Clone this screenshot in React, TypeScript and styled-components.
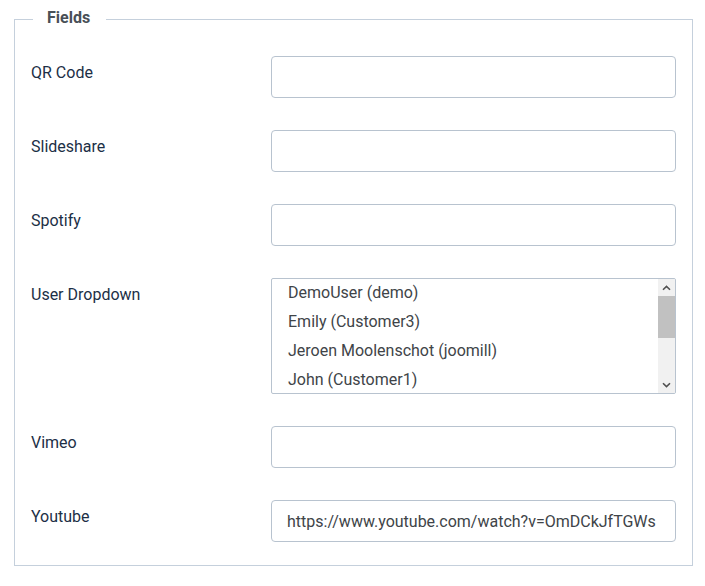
import React from "react";
import styled, { createGlobalStyle } from "styled-components";

const Global = createGlobalStyle`
  html, body { margin: 0; padding: 0; background: #fff; }
  body { font-family: Roboto, "Noto Sans", Arial, sans-serif; }
  * { box-sizing: border-box; }
`;

const Page = styled.div`
  padding: 6px 13px 0 14px;
`;

const Fieldset = styled.fieldset`
  margin: 0;
  padding: 0 16px 23px 16px;
  border: 1px solid #c5d0dc;
  min-width: 0;
  width: 679px;
`;

const Legend = styled.legend`
  margin-left: 2px;
  padding: 0 16px 2px 14px;
  font-size: 16px;
  font-weight: 700;
  line-height: 24px;
  color: #495057;
`;

const Rows = styled.div`
  display: flex;
  flex-direction: column;
  gap: 32px;
  padding-top: 24px;
`;

const Row = styled.div`
  display: grid;
  grid-template-columns: 240px 1fr;
  align-items: start;
`;

const Label = styled.label`
  padding-top: 5px;
  font-size: 16px;
  line-height: 24px;
  color: #1c2f46;
`;

const Input = styled.input`
  display: block;
  width: 100%;
  height: 42px;
  margin: 0;
  padding: 0 15px;
  border: 1px solid #b8c3cf;
  border-radius: 4px;
  background: #fff;
  font-family: Roboto, "Noto Sans", Arial, sans-serif;
  font-size: 16px;
  color: #404448;
  outline: none;
`;

const ListBox = styled.div`
  display: flex;
  height: 116px;
  border: 1px solid #b8c3cf;
  border-radius: 2px;
  overflow: hidden;
  background: #fff;
`;

const Options = styled.div`
  flex: 1;
  overflow: hidden;
  margin-top: -1px;
`;

const Option = styled.div`
  height: 29px;
  padding: 0 16px;
  font-size: 16px;
  line-height: 29px;
  color: #404448;
  white-space: nowrap;
`;

const Scrollbar = styled.div`
  width: 17px;
  display: flex;
  flex-direction: column;
  background: #f1f1f1;
`;

const ArrowBtn = styled.div`
  height: 17px;
  display: flex;
  align-items: center;
  justify-content: center;
`;

const Track = styled.div`
  flex: 1;
  display: flex;
  flex-direction: column;
`;

const Thumb = styled.div`
  height: 42px;
  background: #c1c1c1;
`;

const Arrow = ({ down }: { down?: boolean }) => (
  <svg width="9" height="6" viewBox="0 0 9 6">
    <path
      d={down ? "M1 1.2 L4.5 4.6 L8 1.2" : "M1 4.8 L4.5 1.4 L8 4.8"}
      fill="none"
      stroke="#505050"
      strokeWidth="1.6"
    />
  </svg>
);

const users = [
  "DemoUser (demo)",
  "Emily (Customer3)",
  "Jeroen Moolenschot (joomill)",
  "John (Customer1)",
];

const TextRow = ({ label, value }: { label: string; value?: string }) => (
  <Row>
    <Label>{label}</Label>
    <Input type="text" defaultValue={value ?? ""} />
  </Row>
);

export default function App() {
  return (
    <>
      <Global />
      <Page>
        <Fieldset>
          <Legend>Fields</Legend>
          <Rows>
            <TextRow label="QR Code" />
            <TextRow label="Slideshare" />
            <TextRow label="Spotify" />
            <Row>
              <Label>User Dropdown</Label>
              <ListBox>
                <Options>
                  {users.map((u) => (
                    <Option key={u}>{u}</Option>
                  ))}
                </Options>
                <Scrollbar>
                  <ArrowBtn>
                    <Arrow />
                  </ArrowBtn>
                  <Track>
                    <Thumb />
                  </Track>
                  <ArrowBtn>
                    <Arrow down />
                  </ArrowBtn>
                </Scrollbar>
              </ListBox>
            </Row>
            <TextRow label="Vimeo" />
            <TextRow
              label="Youtube"
              value="https://www.youtube.com/watch?v=OmDCkJfTGWs"
            />
          </Rows>
        </Fieldset>
      </Page>
    </>
  );
}
